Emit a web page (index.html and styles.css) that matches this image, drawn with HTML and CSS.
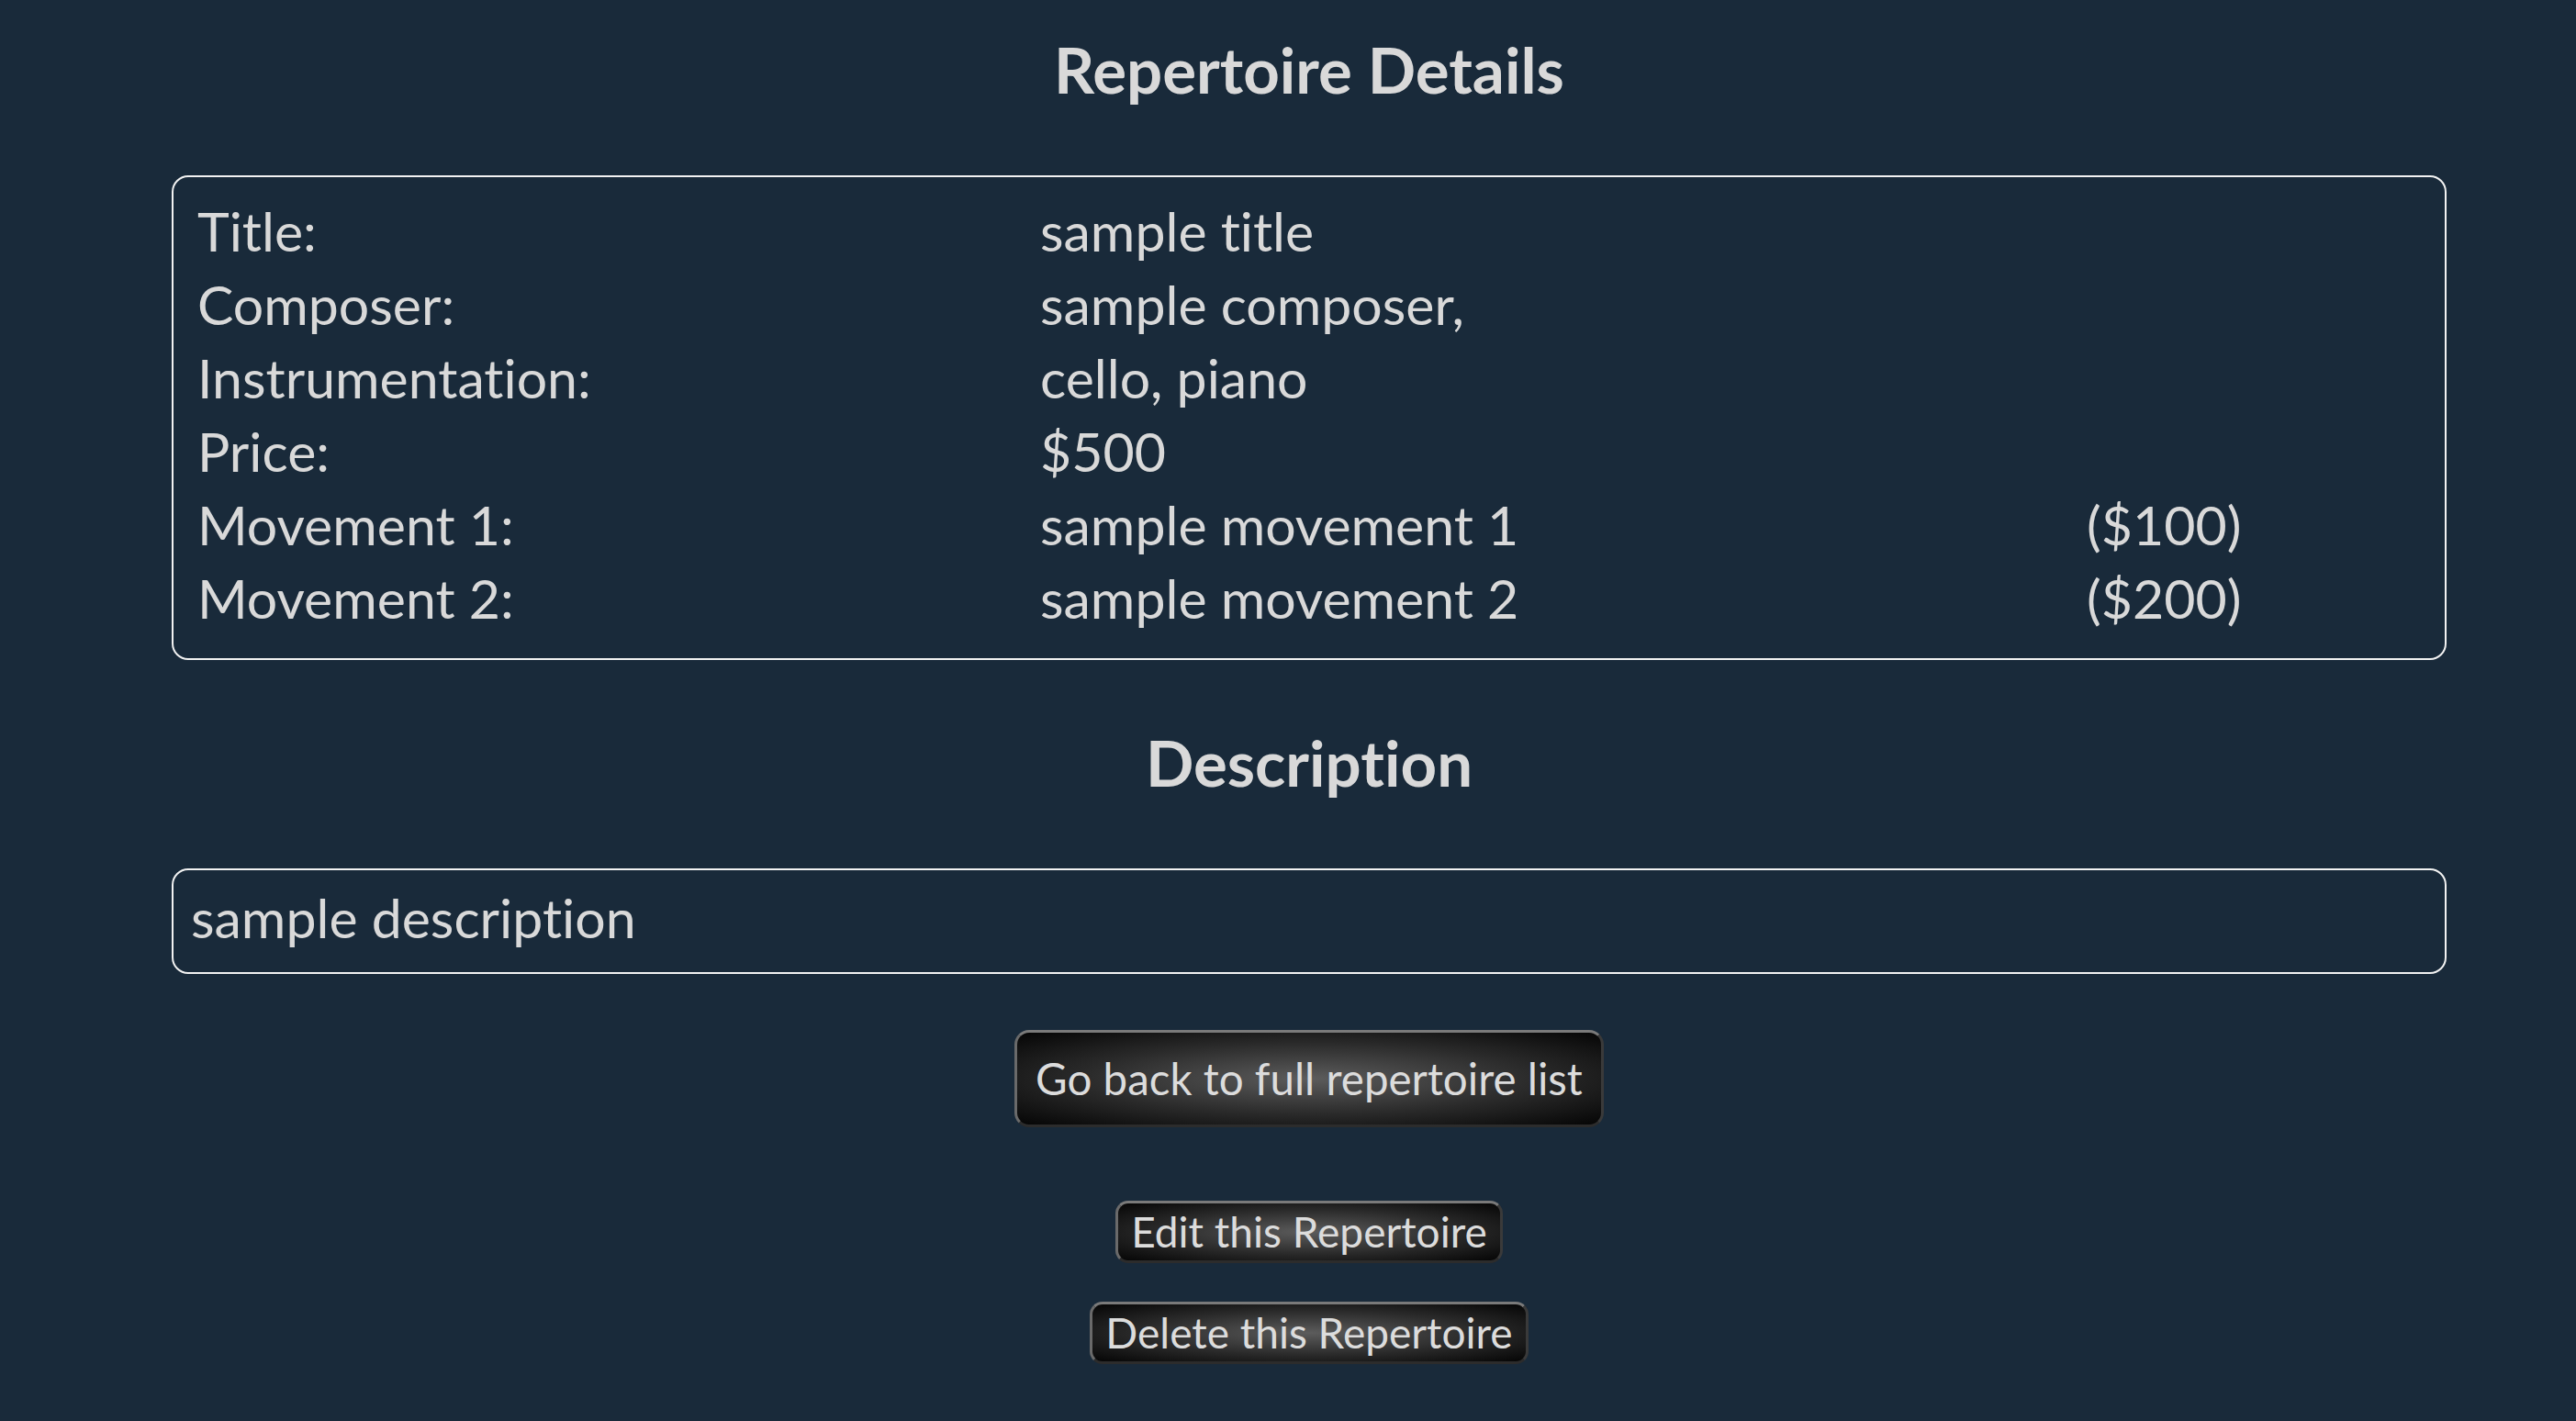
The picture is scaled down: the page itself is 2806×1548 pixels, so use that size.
FILE: index.html
```html
<!DOCTYPE html>
<html lang="en">
<head>
<meta charset="utf-8">
<title>Repertoire Details</title>
<link rel="stylesheet" href="styles.css">
</head>
<body>
<main class="page">
  <h1 class="heading heading-top">Repertoire Details</h1>
  <section class="box details">
    <div class="label">Title:</div><div class="value">sample title</div><div class="extra"></div>
    <div class="label">Composer:</div><div class="value">sample composer,</div><div class="extra"></div>
    <div class="label">Instrumentation:</div><div class="value">cello, piano</div><div class="extra"></div>
    <div class="label">Price:</div><div class="value">$500</div><div class="extra"></div>
    <div class="label">Movement 1:</div><div class="value">sample movement 1</div><div class="extra">($100)</div>
    <div class="label">Movement 2:</div><div class="value">sample movement 2</div><div class="extra">($200)</div>
  </section>
  <h2 class="heading heading-desc">Description</h2>
  <section class="box description">sample description</section>
  <div class="actions">
    <button class="btn btn-big">Go back to full repertoire list</button>
    <button class="btn btn-small btn-edit">Edit this Repertoire</button>
    <button class="btn btn-small btn-delete">Delete this Repertoire</button>
  </div>
</main>
</body>
</html>
```

FILE: styles.css
```css
html, body {
  margin: 0;
  padding: 0;
  background: #192a3a;
}
body {
  font-family: Lato, "Open Sans", sans-serif;
  font-variant-ligatures: none;
  color: #d9d9d9;
}
.page {
  margin-left: 187px;
  width: 2478px;
  display: flex;
  flex-direction: column;
  align-items: stretch;
}
.heading {
  font-family: Lato, sans-serif;
  font-weight: 700;
  font-size: 69px;
  line-height: 80px;
  text-align: center;
  color: #d9d9d9;
  margin: 0;
}
.heading-top {
  margin-top: 36px;
  margin-bottom: 75px;
}
.heading-desc {
  margin-top: 72px;
  margin-bottom: 75px;
}
.box {
  border: 2px solid #f2f2f2;
  border-radius: 18px;
  font-size: 59px;
  line-height: 80px;
}
.details {
  display: grid;
  grid-template-columns: 918px 1140px 1fr;
  padding: 19px 26px 25px 26px;
}
.description {
  padding: 12px 19px 19px 19px;
}
.actions {
  display: flex;
  flex-direction: column;
  align-items: center;
  margin-top: 61px;
}
.btn {
  font-family: Lato, sans-serif;
  font-variant-ligatures: none;
  font-size: 46px;
  line-height: 56px;
  color: #dcdcdc;
  border: 3px solid;
  border-color: #7a7a7a #3a3a3a #2c2c2c #6a6a6a;
  border-radius: 16px;
  background: radial-gradient(ellipse at center, #5c5c5c 0%, #2a2a2a 55%, #050505 100%);
  cursor: pointer;
}
.btn-big {
  font-size: 47.5px;
  padding: 22px 20px;
}
.btn-small {
  padding: 3px 14px 3px 14px;
  border-radius: 14px;
}
.btn-edit {
  margin-top: 80px;
}
.btn-delete {
  margin-top: 42px;
}
```
